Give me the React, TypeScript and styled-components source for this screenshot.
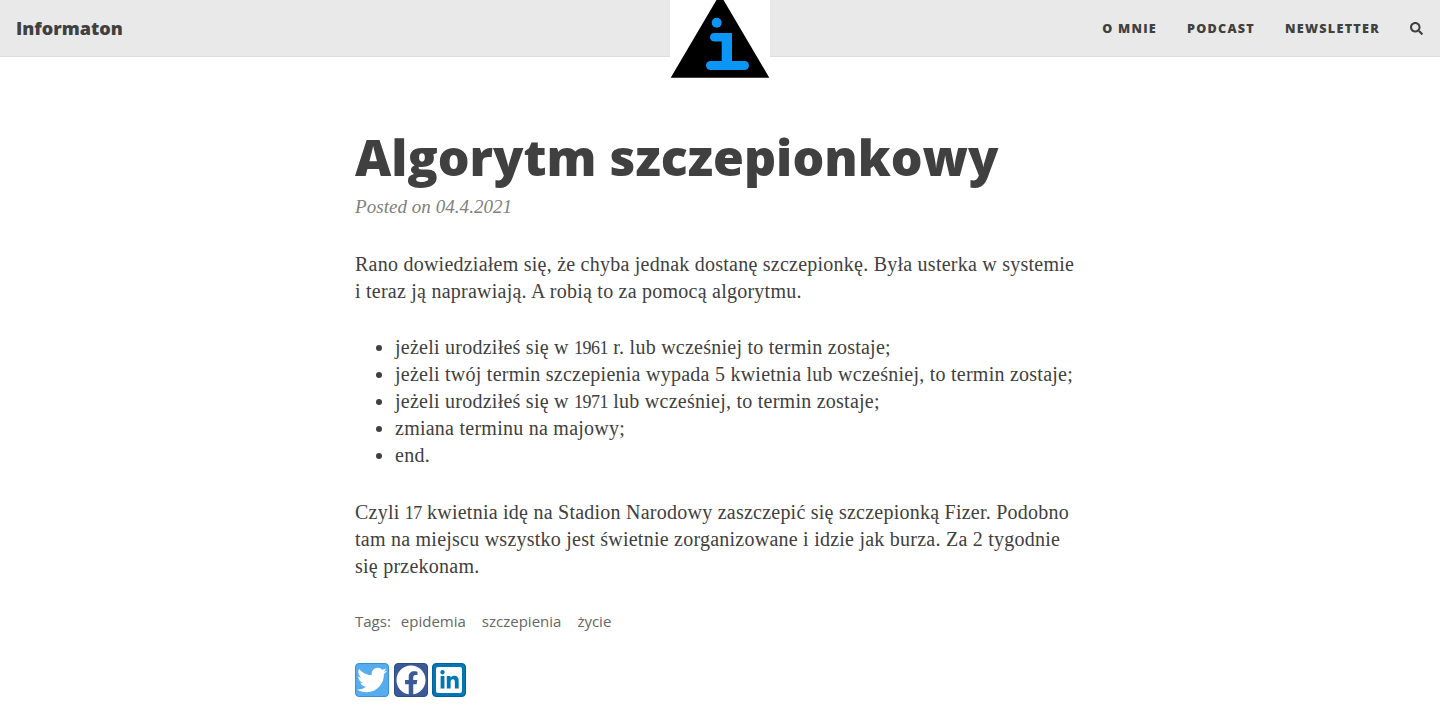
import { ReactNode } from 'react';
import styled, { createGlobalStyle } from 'styled-components';
import { FaSearch, FaTwitter, FaLinkedinIn, FaFacebook } from 'react-icons/fa';

const GlobalStyle = createGlobalStyle`
  html, body {
    margin: 0;
    padding: 0;
    background: #fff;
    overflow: hidden;
  }
`;

const serif = `"Liberation Serif", serif`;
const sans = `"Open Sans", sans-serif`;

const links = ['O MNIE', 'PODCAST', 'NEWSLETTER'];
const tags = ['epidemia', 'szczepienia', 'życie'];

const App = () => {
  const items: ReactNode[] = [
    <>jeżeli urodziłeś się w <Num>1961</Num> r. lub wcześniej to termin zostaje;</>,
    'jeżeli twój termin szczepienia wypada 5 kwietnia lub wcześniej, to termin zostaje;',
    <>jeżeli urodziłeś się w <Num>1971</Num> lub wcześniej, to termin zostaje;</>,
    'zmiana terminu na majowy;',
    'end.',
  ];

  return (
    <Page>
      <GlobalStyle />
      <Navbar>
        <Brand>Informaton</Brand>
        <Logo>
          <svg width="100" height="80" viewBox="0 0 100 80">
            <path d="M50 -6 L99.300 77.700 H0.700 Z" fill="#000" />
            <circle cx="46.700" cy="22.700" r="5" fill="#0b96f5" />
            <rect x="40" y="33" width="22" height="8.500" rx="4.250" fill="#0b96f5" />
            <rect x="51.700" y="33" width="10.300" height="32" fill="#0b96f5" />
            <rect x="36" y="61" width="43" height="9" rx="4.500" fill="#0b96f5" />
          </svg>
        </Logo>
        <NavLinks>
          {links.map((l) => (
            <NavLink key={l}>{l}</NavLink>
          ))}
          <SearchButton>
            <FaSearch size={13} />
          </SearchButton>
        </NavLinks>
      </Navbar>
      <Article>
        <Title>Algorytm szczepionkowy</Title>
        <Meta>Posted on 04.4.2021</Meta>
        <Paragraph>
          Rano dowiedziałem się, że chyba jednak dostanę szczepionkę. Była usterka w systemie
          <br />i teraz ją naprawiają. A robią to za pomocą algorytmu.
        </Paragraph>
        <List>
          {items.map((item, i) => (
            <li key={i}>{item}</li>
          ))}
        </List>
        <Paragraph>
          Czyli <Num>17</Num> kwietnia idę na Stadion Narodowy zaszczepić się szczepionką Fizer. Podobno
          <br />tam na miejscu wszystko jest świetnie zorganizowane i idzie jak burza. Za 2 tygodnie
          <br />się przekonam.
        </Paragraph>
        <Tags>
          <TagLabel>Tags:</TagLabel>
          {tags.map((t) => (
            <Tag key={t}>{t}</Tag>
          ))}
        </Tags>
        <Share>
          <ShareButton $bg="#55acee" $border="#3c8fd0">
            <FaTwitter size={30} color="#fff" />
          </ShareButton>
          <ShareButton $bg="#3b5998" $border="#324c82">
            <FaFacebook size={30} color="#fff" />
          </ShareButton>
          <ShareButton $bg="#0077b5" $border="#00649a">
            <LinkedinBox>
              <FaLinkedinIn size={21} color="#0077b5" />
            </LinkedinBox>
          </ShareButton>
        </Share>
      </Article>
    </Page>
  );
};

const Page = styled.div`
  height: 720px;
  overflow: hidden;
`;

const Navbar = styled.nav`
  position: relative;
  display: flex;
  align-items: center;
  justify-content: space-between;
  box-sizing: border-box;
  height: 57px;
  padding: 0 17px 0 16px;
  background: #e9e9e9;
  border-bottom: 1px solid #dddddd;
`;

const Brand = styled.a`
  font-family: ${sans};
  font-weight: 800;
  font-size: 18px;
  color: #404040;
`;

const Logo = styled.div`
  position: absolute;
  top: 0;
  left: 670px;
  width: 100px;
  height: 80px;
  background: #fff;

  svg {
    display: block;
  }
`;

const NavLinks = styled.div`
  display: flex;
  align-items: center;
  gap: 30px;
`;

const NavLink = styled.a`
  font-family: ${sans};
  font-weight: 800;
  font-size: 12.600px;
  letter-spacing: 1.260px;
  color: #404040;
`;

const SearchButton = styled.span`
  display: flex;
  color: #404040;
`;

const Article = styled.main`
  width: 730px;
  margin: 0 auto;
  padding-top: 66px;
  color: #404040;
`;

const Title = styled.h1`
  margin: 0;
  font-family: ${sans};
  font-weight: 800;
  font-size: 50px;
  line-height: 68px;
  color: #404040;
`;

const Meta = styled.div`
  margin-top: 2px;
  font-family: ${serif};
  font-style: italic;
  font-size: 19px;
  letter-spacing: 0.050px;
  line-height: 28px;
  color: #808080;
`;

const Paragraph = styled.p`
  margin: 30px 0 0;
  font-family: ${serif};
  font-size: 20px;
  letter-spacing: 0.240px;
  line-height: 27px;
  white-space: nowrap;
`;

const Num = styled.span`
  font-size: 18px;
  line-height: 0;
  letter-spacing: -0.500px;
`;

const List = styled.ul`
  margin: 29px 0 0;
  padding: 0 0 0 40px;
  font-family: ${serif};
  font-size: 20px;
  letter-spacing: 0.250px;
  line-height: 27px;
  white-space: nowrap;
`;

const Tags = styled.div`
  display: flex;
  gap: 16px;
  margin-top: 31px;
  font-family: ${sans};
  font-size: 15px;
  line-height: 20px;
  color: #666;
`;

const TagLabel = styled.span`
  margin-right: -6px;
`;

const Tag = styled.a`
  color: #666;
`;

const Share = styled.div`
  display: flex;
  gap: 4.500px;
  margin-top: 32px;
`;

const ShareButton = styled.a<{ $bg: string; $border: string }>`
  display: flex;
  align-items: center;
  justify-content: center;
  box-sizing: border-box;
  width: 34px;
  height: 34px;
  border-radius: 4px;
  background: ${({ $bg }) => $bg};
  border: 1px solid ${({ $border }) => $border};
`;

const LinkedinBox = styled.span`
  display: flex;
  align-items: center;
  justify-content: center;
  width: 26px;
  height: 26px;
  border-radius: 2px;
  background: #fff;
`;

export default App;
